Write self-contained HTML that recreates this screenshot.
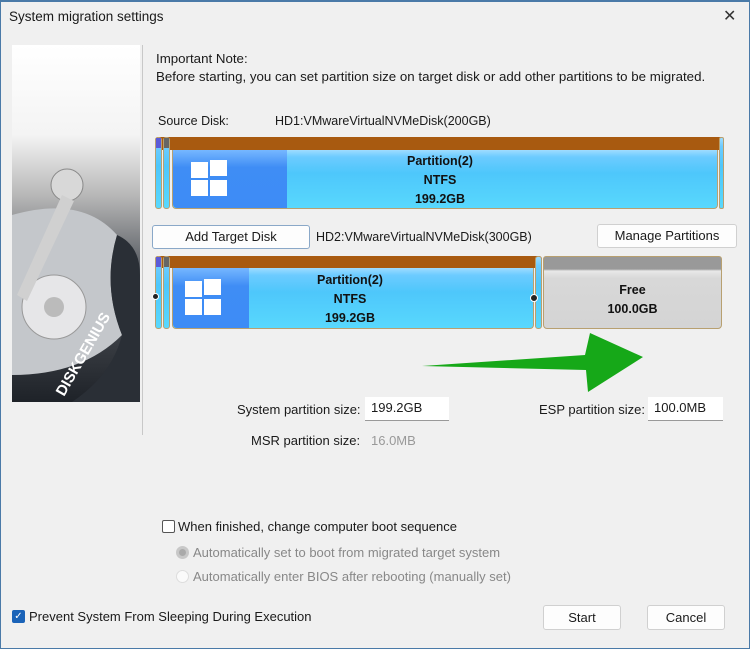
<!DOCTYPE html>
<html><head><style>
*{margin:0;padding:0;box-sizing:border-box}
body{width:750px;height:649px;overflow:hidden;background:#f0f0f0;font-family:"Liberation Sans",sans-serif;font-size:12.5px;color:#1a1a1a;position:relative}
.a{position:absolute;white-space:nowrap}
.btn{position:absolute;background:#fdfdfd;border:1px solid #d0d0d0;border-radius:3px;text-align:center;font-size:13px}
.inp{position:absolute;background:#fff;border-bottom:1px solid #999;padding:3px 6px;font-size:13px}
.bold{font-weight:bold;font-size:12.5px;text-align:center;line-height:19px;color:#111}
.cyan{background:linear-gradient(#9fdcff 0,#6ccbff 12%,#4ec7fb 40%,#58d8fd 100%)}
.dark{background:linear-gradient(#76b7ff,#3f8df5 30%,#3d8cf6 100%)}
.win{position:absolute;width:38px;height:36px}
.win i{position:absolute;background:#fff;width:17px;height:16px}
</style></head><body>
<div class="a" style="left:0;top:0;width:750px;height:649px;border:1px solid #4a7aa8;border-top:2px solid #4a7aa8"></div>
<div class="a" style="left:9px;top:9px;font-size:13.5px">System migration settings</div>
<div class="a" style="left:723px;top:6px;font-size:16px;color:#333">✕</div>

<div class="a" style="left:12px;top:45px;width:128px;height:357px;background:linear-gradient(#fff 0,#f4f4f4 25%,#b8b8b8 42%,#5a5e64 62%,#1e2228 100%);overflow:hidden">
<svg width="128" height="357" viewBox="0 0 128 357">
<path d="M0 170 Q70 150 105 190 Q90 240 110 290 Q70 330 0 330Z" fill="#c4c7cb"/>
<path d="M105 190 Q128 200 128 230 L128 357 L60 357 Q100 330 110 290 Q90 240 105 190Z" fill="#2a2f36"/>
<circle cx="42" cy="262" r="32" fill="#e6e6e8" stroke="#999"/>
<circle cx="42" cy="262" r="10" fill="#bbb"/>
<circle cx="55" cy="140" r="16" fill="#d8d8d8" stroke="#888"/>
<path d="M50 150 L5 250 L15 256 L62 156Z" fill="#d0d0d0"/>
<text x="52" y="352" transform="rotate(-60 52 352)" font-family="Liberation Sans" font-weight="bold" font-size="15" fill="#fff">DISKGENIUS</text>
</svg></div>
<div class="a" style="left:142px;top:45px;width:1px;height:390px;background:#c8c8c8"></div>

<div class="a" style="left:156px;top:51px;font-size:13.3px">Important Note:</div>
<div class="a" style="left:156px;top:69px;font-size:13.3px">Before starting, you can set partition size on target disk or add other partitions to be migrated.</div>
<div class="a" style="left:158px;top:114px">Source Disk:</div>
<div class="a" style="left:275px;top:114px">HD1:VMwareVirtualNVMeDisk(200GB)</div>

<!-- source disk -->
<div class="a" style="left:155px;top:137px;width:568px;height:72px">
 <div class="a" style="left:0;top:0;width:568px;height:13px;background:#a85a10;border-radius:3px 3px 0 0"></div>
 <div class="a cyan" style="left:0;top:0;width:7px;height:72px;border-radius:3px;border:1px solid #b8a070"></div>
 <div class="a" style="left:1px;top:1px;width:5px;height:10px;background:#5b5bd8"></div>
 <div class="a cyan" style="left:8px;top:0;width:7px;height:72px;border-radius:3px;border:1px solid #b8a070"></div>
 <div class="a" style="left:9px;top:1px;width:5px;height:10px;background:#666"></div>
 <div class="a cyan" style="left:17px;top:13px;width:546px;height:59px;border-radius:0 0 4px 4px;border:1px solid #b8a070;border-top:none"></div>
 <div class="a dark" style="left:18px;top:13px;width:114px;height:58px;border-radius:0 0 0 4px"></div>
 <div class="win" style="left:36px;top:23px"><i style="left:0;top:2px"></i><i style="left:19px;top:0"></i><i style="left:0;top:20px"></i><i style="left:19px;top:20px"></i></div>
 <div class="a bold" style="left:200px;top:15px;width:170px">Partition(2)<br>NTFS<br>199.2GB</div>
 <div class="a cyan" style="left:564px;top:0;width:5px;height:72px;border-radius:2px;border:1px solid #b8a070"></div>
</div>

<div class="btn" style="left:152px;top:225px;width:158px;height:24px;line-height:22px;border-color:#8aa8c8">Add Target Disk</div>
<div class="a" style="left:316px;top:230px">HD2:VMwareVirtualNVMeDisk(300GB)</div>
<div class="btn" style="left:597px;top:224px;width:140px;height:24px;line-height:22px">Manage Partitions</div>

<!-- target disk -->
<div class="a" style="left:155px;top:256px;width:568px;height:73px">
 <div class="a" style="left:0;top:0;width:387px;height:12px;background:#a85a10;border-radius:3px 3px 0 0"></div>
 <div class="a cyan" style="left:0;top:0;width:7px;height:73px;border-radius:3px;border:1px solid #b8a070"></div>
 <div class="a" style="left:1px;top:1px;width:5px;height:10px;background:#5b5bd8"></div>
 <div class="a cyan" style="left:8px;top:0;width:7px;height:73px;border-radius:3px;border:1px solid #b8a070"></div>
 <div class="a" style="left:9px;top:1px;width:5px;height:10px;background:#666"></div>
 <div class="a cyan" style="left:17px;top:12px;width:362px;height:61px;border-radius:0 0 4px 4px;border:1px solid #b8a070;border-top:none"></div>
 <div class="a dark" style="left:18px;top:12px;width:76px;height:60px;border-radius:0 0 0 4px"></div>
 <div class="win" style="left:30px;top:23px"><i style="left:0;top:2px"></i><i style="left:19px;top:0"></i><i style="left:0;top:20px"></i><i style="left:19px;top:20px"></i></div>
 <div class="a bold" style="left:110px;top:15px;width:170px">Partition(2)<br>NTFS<br>199.2GB</div>
 <div class="a cyan" style="left:380px;top:0;width:7px;height:73px;border-radius:3px;border:1px solid #b8a070"></div>
 <div class="a" style="left:-3px;top:37px;width:7px;height:7px;border-radius:50%;background:#222;border:1px solid #fff"></div>
 <div class="a" style="left:375px;top:38px;width:8px;height:8px;border-radius:50%;background:#222;border:1px solid #fff"></div>
 <div class="a" style="left:388px;top:0;width:179px;height:73px;background:linear-gradient(#999 0,#999 12px,#e8e8e8 14px,#d8d8d8 30%,#d4d4d4 100%);border:1px solid #b8a070;border-radius:3px 3px 4px 4px"></div>
 <div class="a bold" style="left:388px;top:25px;width:179px">Free<br>100.0GB</div>
</div>

<svg class="a" style="left:0;top:0" width="750" height="649"><polygon points="422,366 585,355 590,333 643,357 588,392 586,370" fill="#16a818"/></svg>

<div class="a" style="left:237px;top:402px;font-size:13px">System partition size:</div>
<div class="inp" style="left:365px;top:397px;width:84px;height:24px">199.2GB</div>
<div class="a" style="left:251px;top:433px;font-size:13px">MSR partition size:</div>
<div class="a" style="left:371px;top:433px;font-size:13px;color:#999">16.0MB</div>
<div class="a" style="left:539px;top:402px;font-size:13px">ESP partition size:</div>
<div class="inp" style="left:648px;top:397px;width:75px;height:24px">100.0MB</div>

<div class="a" style="left:162px;top:520px;width:13px;height:13px;border:1px solid #555;border-radius:2px;background:#fff"></div>
<div class="a" style="left:178px;top:519px;font-size:13px">When finished, change computer boot sequence</div>
<div class="a" style="left:176px;top:546px;width:13px;height:13px;border-radius:50%;border:3px solid #c8c8c8;background:#aaa"></div>
<div class="a" style="left:193px;top:545px;font-size:13px;color:#888">Automatically set to boot from migrated target system</div>
<div class="a" style="left:176px;top:570px;width:13px;height:13px;border-radius:50%;border:1px solid #ddd;background:#fafafa"></div>
<div class="a" style="left:193px;top:569px;font-size:13px;color:#888">Automatically enter BIOS after rebooting (manually set)</div>

<div class="a" style="left:12px;top:610px;width:13px;height:13px;border-radius:2px;background:#1a63b8;color:#fff;font-size:10px;line-height:13px;text-align:center">✓</div>
<div class="a" style="left:29px;top:609px;font-size:13px">Prevent System From Sleeping During Execution</div>
<div class="btn" style="left:543px;top:605px;width:78px;height:25px;line-height:23px">Start</div>
<div class="btn" style="left:647px;top:605px;width:78px;height:25px;line-height:23px">Cancel</div>
</body></html>
